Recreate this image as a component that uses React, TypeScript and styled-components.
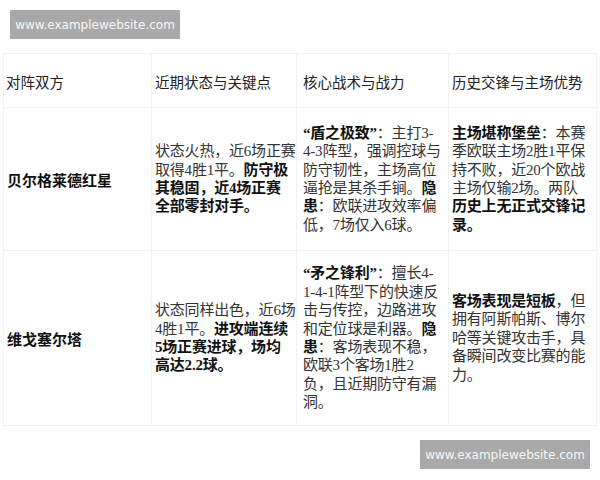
import React from "react";
import styled, { createGlobalStyle } from "styled-components";

const Global = createGlobalStyle`
  html, body { margin: 0; padding: 0; background: #ffffff; }
  body { width: 600px; height: 480px; overflow: hidden; position: relative; }
`;

const Page = styled.div`
  position: relative;
  width: 600px;
  height: 480px;
  padding: 53px 0 0 3px;
  box-sizing: border-box;
`;

const Table = styled.div`
  display: grid;
  grid-template-columns: 148px 145px 152px 148px;
  grid-template-rows: 54px 143px 175px;
  border-top: 1px solid #f2f2f2;
  border-left: 1px solid #f4f4f4;
  width: 593px;
  box-sizing: border-box;
`;

const Cell = styled.div<{ $pl?: number; $head?: boolean }>`
  display: flex;
  align-items: center;
  padding: ${(p) => (p.$head ? "2px" : "0")} 0 0 ${(p) => p.$pl ?? 2}px;
  border-right: 1px solid #f2f2f2;
  border-bottom: 1px solid #f2f2f2;
  box-sizing: border-box;
  overflow: visible;
`;

const HeadText = styled.span`
  font-family: "Noto Sans CJK SC", "Noto Sans", sans-serif;
  font-size: 14.5px;
  color: #222;
  white-space: nowrap;
`;

const Team = styled.span`
  font-family: "Noto Sans CJK SC", "Noto Sans", sans-serif;
  font-size: 15px;
  font-weight: 700;
  color: #111;
  white-space: nowrap;
`;

const Body = styled.div`
  font-family: "Liberation Serif", "Noto Sans CJK SC", serif;
  font-size: 15px;
  line-height: 18.4px;
  color: #333;
  white-space: nowrap;
  letter-spacing: -0.2px;
  b {
    font-weight: 700;
    color: #111;
  }
`;

const Watermark = styled.div<{ $x: number; $y: number }>`
  position: absolute;
  left: ${(p) => p.$x}px;
  top: ${(p) => p.$y}px;
  width: 170px;
  height: 29px;
  background: #a9a9a9;
  color: #f7f7f7;
  font-family: "DejaVu Sans", sans-serif;
  font-size: 12px;
  display: flex;
  align-items: center;
  justify-content: center;
`;

export default function App() {
  return (
    <>
      <Global />
      <Page>
        <Table>
          <Cell $head $pl={2}><HeadText>对阵双方</HeadText></Cell>
          <Cell $head $pl={3}><HeadText>近期状态与关键点</HeadText></Cell>
          <Cell $head $pl={6}><HeadText>核心战术与战力</HeadText></Cell>
          <Cell $head $pl={3}><HeadText>历史交锋与主场优势</HeadText></Cell>

          <Cell $pl={3}><Team>贝尔格莱德红星</Team></Cell>
          <Cell $pl={3}>
            <Body>
              状态火热，近6场正赛<br />取得4胜1平。<b>防守极<br />其稳固，近4场正赛<br />全部零封对手。</b>
            </Body>
          </Cell>
          <Cell $pl={6}>
            <Body>
              <b>“盾之极致”</b>：主打3-<br />4-3阵型，强调控球与<br />防守韧性，主场高位<br />逼抢是其杀手锏。<b>隐<br />患</b>：欧联进攻效率偏<br />低，7场仅入6球。
            </Body>
          </Cell>
          <Cell $pl={3}>
            <Body>
              <b>主场堪称堡垒</b>：本赛<br />季欧联主场2胜1平保<br />持不败，近20个欧战<br />主场仅输2场。两队<br /><b>历史上无正式交锋记<br />录。</b>
            </Body>
          </Cell>

          <Cell $pl={3}><Team>维戈塞尔塔</Team></Cell>
          <Cell $pl={3}>
            <Body>
              状态同样出色，近6场<br />4胜1平。<b>进攻端连续<br />5场正赛进球，场均<br />高达2.2球。</b>
            </Body>
          </Cell>
          <Cell $pl={6}>
            <Body>
              <b>“矛之锋利”</b>：擅长4-<br />1-4-1阵型下的快速反<br />击与传控，边路进攻<br />和定位球是利器。<b>隐<br />患</b>：客场表现不稳，<br />欧联3个客场1胜2<br />负，且近期防守有漏<br />洞。
            </Body>
          </Cell>
          <Cell $pl={3}>
            <Body>
              <b>客场表现是短板</b>，但<br />拥有阿斯帕斯、博尔<br />哈等关键攻击手，具<br />备瞬间改变比赛的能<br />力。
            </Body>
          </Cell>
        </Table>
        <Watermark $x={10} $y={10}>www.examplewebsite.com</Watermark>
        <Watermark $x={420} $y={440}>www.examplewebsite.com</Watermark>
      </Page>
    </>
  );
}
